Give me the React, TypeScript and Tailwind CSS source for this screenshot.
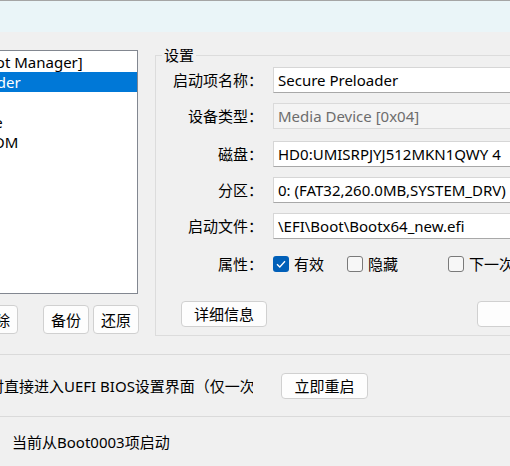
import React from 'react';

const font = { fontFamily: '"Noto Sans", "Noto Sans CJK SC", sans-serif' };

const bootItems = ['Boot Manager]', 'Preloader', '', 'Hard Drive', 'CD/DVD-ROM'];

const Field: React.FC<{ label: string; value: string; disabled?: boolean }> = ({ label, value, disabled }) => (
    <div className="flex items-center h-[26px]">
        <div className="w-[111px] text-right pr-[4px] shrink-0">{label}</div>
        <div
            className={
                disabled
                    ? 'h-[26px] w-[300px] ml-[6px] shrink-0 border border-[#dadada] bg-[#f4f4f4] text-[#6d6d6d] pl-[4px] flex items-center whitespace-nowrap'
                    : 'h-[26px] w-[300px] ml-[6px] shrink-0 border border-[#d6d6d6] border-b-[#a8a8a8] bg-white pl-[4px] flex items-center whitespace-nowrap'
            }
        >
            {value}
        </div>
    </div>
);

const Check: React.FC<{ label: string; checked?: boolean }> = ({ label, checked }) => (
    <div className="flex items-center gap-[5px] whitespace-nowrap">
        {checked ? (
            <span className="w-[16px] h-[16px] rounded-[3px] bg-[#005fb8] flex items-center justify-center">
                <svg width="10" height="8" viewBox="0 0 10 8" fill="none">
                    <path d="M1 4.2 L3.8 7 L9 1.2" stroke="white" strokeWidth="1.3" />
                </svg>
            </span>
        ) : (
            <span className="w-[16px] h-[16px] rounded-[3px] border border-[#7a7a7a] bg-[#f7f7f7]" />
        )}
        <span>{label}</span>
    </div>
);

const Btn: React.FC<{ children?: React.ReactNode; className?: string }> = ({ children, className }) => (
    <div
        className={
            'h-[26px] rounded-[4px] border border-[#d0d0d0] bg-[#fdfdfd] flex items-center justify-center whitespace-nowrap ' +
            (className || '')
        }
    >
        {children}
    </div>
);

// list is cut at the left edge of the window, so each label is shifted left
const shifts = ['ml-[-22px]', 'ml-[-47px]', 'ml-0', 'ml-[-72px]', 'ml-[-77px]'];

export default function App() {
    return (
        <div className="w-[510px] h-[466px] bg-[#f0f0f0] overflow-hidden text-[15px] text-black leading-[20px]" style={font}>
            <div className="h-[32px] bg-[#eaf5f8] border-t border-[#a5a5a5]" />

            <div className="flex h-[322px]">
                {/* boot entry list */}
                <div className="w-[155px] shrink-0 pt-[18px]">
                    <div className="w-[140px] ml-[-2px] h-[244px] bg-white border border-[#828790] pt-[1px] overflow-hidden">
                        {bootItems.map((item, i) => (
                            <div
                                key={i}
                                className={
                                    i === 1
                                        ? 'h-[20px] bg-[#0078d7] text-white whitespace-nowrap'
                                        : 'h-[20px] whitespace-nowrap'
                                }
                            >
                                <span className={'inline-block ' + shifts[i]}>{item}</span>
                            </div>
                        ))}
                    </div>
                    <div className="flex mt-[11px] h-[29px]">
                        <Btn className="w-[46px] ml-[-28px] h-[29px]">删除</Btn>
                        <Btn className="w-[46px] ml-[25px] h-[29px]">备份</Btn>
                        <Btn className="w-[46px] ml-[4px] h-[29px]">还原</Btn>
                    </div>
                </div>

                {/* settings group */}
                <fieldset className="mt-[13px] h-[291px] w-[380px] shrink-0 border border-[#dcdcdc] pl-0">
                    <legend className="ml-[6px] px-[2px]">设置</legend>
                    <div className="flex flex-col mt-[2px]">
                        <Field label="启动项名称：" value="Secure Preloader" />
                        <div className="h-[10px]" />
                        <Field label="设备类型：" value="Media Device [0x04]" disabled />
                        <div className="h-[12px]" />
                        <Field label="磁盘：" value="HD0:UMISRPJYJ512MKN1QWY 4" />
                        <div className="h-[10px]" />
                        <Field label="分区：" value="0: (FAT32,260.0MB,SYSTEM_DRV)" />
                        <div className="h-[10px]" />
                        <Field label="启动文件：" value="\EFI\Boot\Bootx64_new.efi" />
                        <div className="flex items-center h-[26px] mt-[12px]">
                            <div className="w-[111px] text-right pr-[4px] shrink-0">属性：</div>
                            <div className="flex items-center ml-[6px]">
                                <Check label="有效" checked />
                                <div className="ml-[23px]">
                                    <Check label="隐藏" />
                                </div>
                                <div className="ml-[50px]">
                                    <Check label="下一次启动" />
                                </div>
                            </div>
                        </div>
                        <div className="flex mt-[24px] h-[25px]">
                            <Btn className="w-[86px] h-[25px] ml-[25px]">详细信息</Btn>
                            <Btn className="w-[90px] h-[25px] ml-[210px]" />
                        </div>
                    </div>
                </fieldset>
            </div>

            <div className="border-t border-[#dadada] h-[62px] flex items-center">
                <div className="ml-[-11px] whitespace-nowrap w-[264px] overflow-hidden">时直接进入UEFI BIOS设置界面（仅一次</div>
                <Btn className="w-[87px] h-[25px] ml-[28px]">立即重启</Btn>
            </div>

            <div className="border-t border-[#dadada] h-[50px] flex items-center pl-[12px]">
                当前从Boot0003项启动
            </div>
        </div>
    );
}
